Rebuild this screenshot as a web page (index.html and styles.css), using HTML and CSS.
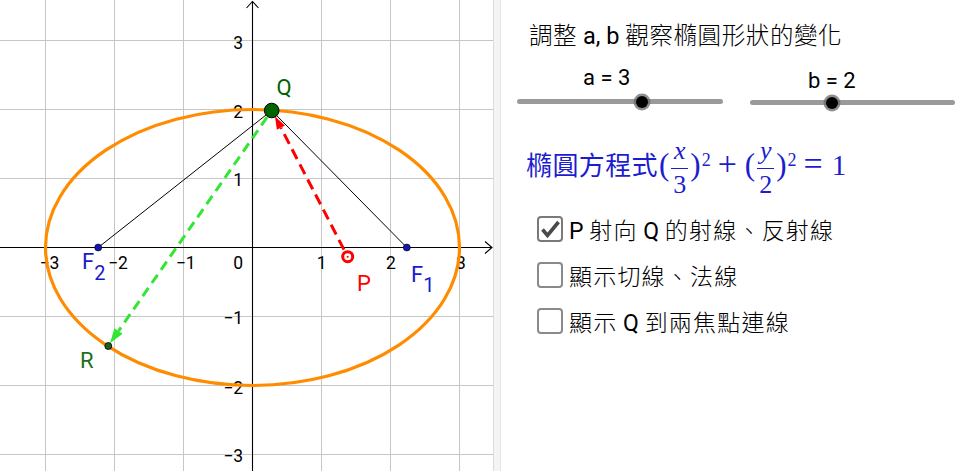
FILE: index.html
```html
<!DOCTYPE html>
<html>
<head>
<meta charset="utf-8">
<title>橢圓</title>
<link rel="stylesheet" href="styles.css">
</head>
<body>
<div class="app">
  <div class="graph">
    <svg width="493" height="471" viewBox="0 0 493 471">
      <g class="grid">
        <path d="M45.5 0V471M114.5 0V471M183.5 0V471M321.5 0V471M390.5 0V471M459.5 0V471"/>
        <path d="M0 40.5H493M0 109.5H493M0 178.5H493M0 316.5H493M0 385.5H493M0 454.5H493"/>
      </g>
      <g class="axis">
        <path d="M0 247.5H492M485 241.5L492 247.5L485 253.5"/>
        <path d="M252.5 1V471M246.5 8L252.5 1.5L258.5 8"/>
      </g>
      <g class="tick">
        <text x="243" y="49.3" text-anchor="end">3</text>
        <text x="243" y="117.5" text-anchor="end">2</text>
        <text x="243" y="186" text-anchor="end">1</text>
        <text x="243" y="269" text-anchor="end">0</text>
        <text x="243" y="324.3" text-anchor="end">−1</text>
        <text x="243" y="394.3" text-anchor="end">−2</text>
        <text x="243" y="462.3" text-anchor="end">−3</text>
        <text x="49.3" y="269" text-anchor="middle">−3</text>
        <text x="118" y="269" text-anchor="middle">−2</text>
        <text x="185.6" y="269" text-anchor="middle">−1</text>
        <text x="321.7" y="269" text-anchor="middle">1</text>
        <text x="391" y="269" text-anchor="middle">2</text>
        <text x="461" y="269" text-anchor="middle">3</text>
      </g>
      <ellipse cx="252.5" cy="247.5" rx="207" ry="138" fill="none" stroke="#ff8c00" stroke-width="3.2"/>
      <path d="M98.2 247.5L271.7 110.5M406.8 247.5L271.7 110.5" stroke="#000" stroke-width="1" fill="none"/>
      <path d="M344 249.6L280.9 127.7" stroke="#f00" stroke-width="3" stroke-dasharray="11 6" fill="none"/>
      <polygon points="274.9,116.2 284.9,125.6 276.9,129.8" fill="#f00"/>
      <path d="M267.1 117.1L118.5 331" stroke="#33e633" stroke-width="3" stroke-dasharray="10 6" fill="none"/>
      <polygon points="110,343.3 122.6,333.8 114.4,328.2" fill="#33e633"/>
      <circle cx="406.8" cy="247.5" r="3.5" fill="#1414b4" stroke="#000" stroke-width="0.6"/>
      <circle cx="98.2" cy="247.5" r="3.5" fill="#1414b4" stroke="#000" stroke-width="0.6"/>
      <circle cx="108.3" cy="346" r="3.5" fill="#1f5f1f" stroke="#000" stroke-width="0.8"/>
      <circle cx="271.7" cy="110.5" r="7.3" fill="#006400" stroke="#000" stroke-width="1"/>
      <circle cx="347.7" cy="256.7" r="5" fill="#fff" stroke="#f00" stroke-width="3"/>
      <circle cx="347.7" cy="256.7" r="1" fill="#f00"/>
      <g class="plabel">
        <text x="276.5" y="95" fill="#006400">Q</text>
        <text x="357" y="291" fill="#f00">P</text>
        <text x="80" y="368" fill="#1e6e1e">R</text>
        <text x="411" y="281.5" fill="#1a1acc">F<tspan class="sub" dy="10">1</tspan></text>
        <text x="82" y="269" fill="#1a1acc">F<tspan class="sub" dy="11">2</tspan></text>
      </g>
    </svg>
  </div>
  <div class="divider"></div>
  <div class="panel">
    <p class="title"><span class="cjk">調整</span> a, b <span class="cjk">觀察橢圓形狀的變化</span></p>
    <div class="sliders">
      <div class="slider slider-a">
        <div class="slider-label">a = 3</div>
        <div class="track"><span class="thumb" style="left:60.6%"></span></div>
      </div>
      <div class="slider slider-b">
        <div class="slider-label">b = 2</div>
        <div class="track"><span class="thumb" style="left:40%"></span></div>
      </div>
    </div>
    <div class="formula"><span class="cjk">橢圓方程式</span><span class="paren">(</span><span class="frac"><span class="num var">x</span><span class="den">3</span></span><span class="paren">)</span><sup class="pow">2</sup><span class="op">+</span><span class="paren">(</span><span class="frac"><span class="num var">y</span><span class="den">2</span></span><span class="paren">)</span><sup class="pow">2</sup><span class="op">=</span><span class="one">1</span></div>
    <ul class="options">
      <li class="option"><span class="box checked"><svg width="22" height="22" viewBox="0 0 22 22"><path d="M3.5 11.5L8.5 17.5L19.5 4" fill="none" stroke="#4a4a4a" stroke-width="3.6"/></svg></span><span class="opt-text">P <span class="cjk">射向</span> Q <span class="cjk">的射線、反射線</span></span></li>
      <li class="option"><span class="box"></span><span class="opt-text"><span class="cjk">顯示切線、法線</span></span></li>
      <li class="option"><span class="box"></span><span class="opt-text"><span class="cjk">顯示</span> Q <span class="cjk">到兩焦點連線</span></span></li>
    </ul>
  </div>
</div>
</body>
</html>
```
FILE: styles.css
```css
html, body {
  margin: 0;
  padding: 0;
  background: #fff;
}
body {
  width: 962px;
  height: 471px;
  overflow: hidden;
  font-family: Roboto, "Noto Sans CJK TC", sans-serif;
  color: #000;
}
.app {
  display: flex;
  height: 471px;
}
.graph {
  width: 493px;
  flex: none;
}
.graph svg {
  display: block;
}
.grid path {
  stroke: #c6c6c6;
  stroke-width: 1;
  fill: none;
}
.axis path {
  stroke: #000;
  stroke-width: 1.1;
  fill: none;
}
.tick text {
  font-family: Roboto, sans-serif;
  font-size: 17.5px;
  fill: #000;
}
.plabel text {
  font-family: Roboto, sans-serif;
  font-size: 22px;
}
.plabel .sub {
  font-size: 20px;
}
.divider {
  width: 6px;
  flex: none;
  background: #f4f4f4;
  border-left: 1px solid #dcdcdc;
  border-right: 1px solid #e6e6e6;
}
.panel {
  flex: 1;
  display: flex;
  flex-direction: column;
}
.cjk {
  font-family: "Noto Sans CJK TC", sans-serif;
  font-weight: 300;
}
.title {
  margin: 0;
  padding: 20px 0 0 28px;
  font-size: 23.5px;
  line-height: 28px;
  white-space: nowrap;
}
.title .cjk {
  letter-spacing: 0.6px;
}
.sliders {
  display: flex;
  align-items: flex-start;
  gap: 27px;
  margin: 15px 0 0 16px;
}
.slider {
  width: 206px;
  display: flex;
  flex-direction: column;
}
.slider-b {
  width: 205px;
}
.slider-label {
  font-size: 22px;
  line-height: 26px;
  white-space: nowrap;
}
.slider-a .slider-label {
  margin-left: 66px;
}
.slider-b .slider-label {
  margin-left: 58px;
  margin-top: 3px;
}
.track {
  position: relative;
  height: 5px;
  border-radius: 3px;
  background: #9a9a9a;
  margin-top: 8px;
}
.slider-b .track {
  margin-top: 6px;
}
.thumb {
  position: absolute;
  top: 50%;
  width: 12px;
  height: 12px;
  margin: -6px 0 0 -6px;
  border-radius: 50%;
  background: #000;
  box-shadow: 0 0 0 2.5px rgba(105, 105, 105, 0.75);
}
.formula {
  margin: 34px 0 0 25px;
  color: #1c1cd0;
  font-family: "Liberation Serif", serif;
  font-size: 26px;
  line-height: 30px;
  white-space: nowrap;
}
.formula .cjk {
  font-size: 26px;
  letter-spacing: 0.4px;
  font-weight: 400;
}
.paren {
  font-size: 31px;
  line-height: 0;
  margin: 0 1px;
}
.frac {
  display: inline-block;
  vertical-align: -18px;
  text-align: center;
  line-height: 24px;
  margin: 0 1px;
}
.num {
  display: block;
  padding: 0 2px 5px;
}
.den {
  display: block;
  padding: 4px 2px 0;
  border-top: 1px solid currentColor;
}
.var {
  font-style: italic;
}
.pow {
  font-size: 18px;
  vertical-align: 9px;
  line-height: 0;
}
.op {
  font-size: 34px;
  line-height: 0;
  margin: 0 7px;
}
.one {
  font-size: 29px;
  line-height: 0;
  margin-left: 2px;
}
.options {
  list-style: none;
  margin: 19px 0 0 36px;
  padding: 0;
  display: flex;
  flex-direction: column;
  gap: 20px;
}
.option {
  display: flex;
  align-items: center;
  gap: 6px;
  height: 26px;
  font-size: 23px;
  white-space: nowrap;
}
.option .cjk {
  letter-spacing: 1.2px;
}
.box {
  width: 22px;
  height: 22px;
  flex: none;
  border: 2px solid #8a8a8a;
  border-radius: 4px;
  background: #fff;
  display: flex;
  align-items: center;
  justify-content: center;
}
.box.checked {
  border-color: #7a7a7a;
}
.box svg {
  display: block;
}
```
